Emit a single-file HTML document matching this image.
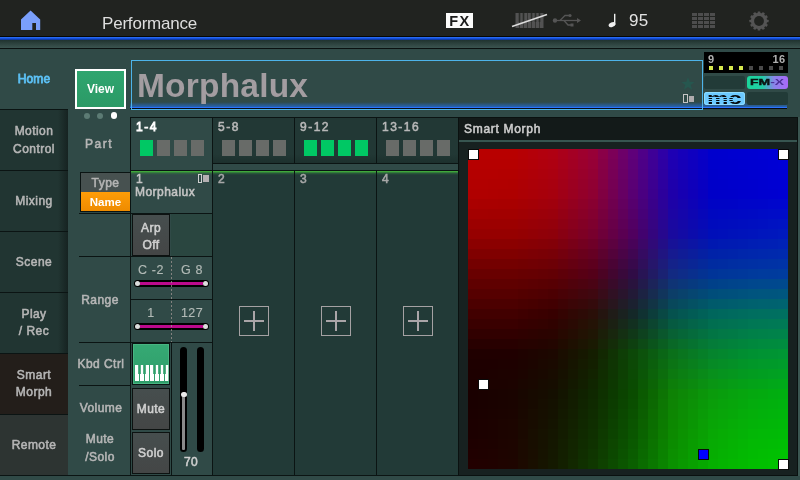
<!DOCTYPE html>
<html><head><meta charset="utf-8"><title>Performance</title>
<style>
*{box-sizing:border-box;margin:0;padding:0}
html,body{width:800px;height:480px;overflow:hidden;background:#304a47}
body{position:relative;font-family:"Liberation Sans",sans-serif;color:#c8c8c8;font-size:12px}
.a{position:absolute}
.t{position:absolute;white-space:nowrap;text-align:center;font-weight:normal;-webkit-text-stroke:.55px;letter-spacing:.45px;color:#b6b6b6;line-height:18px}
#top{left:0;top:0;width:800px;height:36px;background:#212320}
#l1{left:0;top:36px;width:800px;height:1px;background:#050807}
#l2{left:0;top:37px;width:800px;height:3px;background:linear-gradient(#2f74ff,#1550d8 50%,#0a2f90)}
#l3{left:0;top:40px;width:800px;height:8px;background:linear-gradient(#20332f,#3b5450)}
#l4{left:0;top:48px;width:800px;height:1px;background:#0a1110}
.tab{left:0;width:68px;height:61px;background:linear-gradient(90deg,#213532 0,#213532 58px,#162321 68px);border-top:1px solid #0b1413}
.tab .t{left:0;width:68px;font-size:12px}
.hl{height:1px;background:#0b1413}
.vl{width:1px;background:#0b1413}
.btn{background:linear-gradient(#464e4e,#444646);border:1px solid #0d1211}
.gtab{top:117px;width:83px;height:47px;background:linear-gradient(#223835 0,#223835 36px,#1c2f2c 46px);border:1px solid #0b1413}
.gtab .t{left:5px;top:0px;text-align:left;font-size:12px;color:#b8b8b8;letter-spacing:1.5px}
.sq{position:absolute;top:22px;width:13px;height:16px;background:#686b68}
.sq.g{background:#00c864}
.cell{top:170px;width:81px;height:305px;background:#223a37}
.cell .gl{position:absolute;left:0;top:0;width:100%;height:5px;background:linear-gradient(#0b1413 0,#0b1413 1px,#46b43c 1px,#3a9a3a 2px,rgba(50,130,60,.5) 3px,rgba(50,130,60,0) 5px)}
.plus{position:absolute;left:26px;top:136px;width:30px;height:30px;border:1px solid #a5a1a3}
.plus:before{content:"";position:absolute;left:4px;top:13px;width:20px;height:2px;background:#aaa5a8}
.plus:after{content:"";position:absolute;left:13px;top:4px;width:2px;height:20px;background:#aaa5a8}
.mk{position:absolute;width:11px;height:11px;background:#fff;border:1px solid #0a0a0a}
#w{position:absolute;left:0;top:0;width:800px;height:480px;will-change:transform}
</style></head><body><div id="w">

<!-- top bar -->
<div class="a" id="top"></div>
<div class="a" id="l1"></div><div class="a" id="l2"></div><div class="a" id="l3"></div><div class="a" id="l4"></div>
<svg class="a" style="left:20px;top:10px" width="22" height="21" viewBox="0 0 22 21"><path d="M1 9.6 L10.6 0.6 L20.2 9.6 L20.2 20 L16 20 L16 13 L12.3 13 L12.3 20 L1 20 Z" fill="#7a9ffc"/></svg>
<div class="a" style="left:102px;top:13px;font-size:17px;line-height:22px;color:#dedede;letter-spacing:-.2px">Performance</div>
<div class="a" style="left:446px;top:13px;width:27px;height:15px;background:#fbfbfb;color:#1c1c1c;font-weight:bold;font-size:14.5px;line-height:16px;text-align:center;letter-spacing:1.4px;text-indent:1px">FX</div>
<svg class="a" style="left:511px;top:12px" width="37" height="17" viewBox="0 0 37 17"><rect x="4.500" y="1" width="28" height="15" fill="#525252"/><g fill="#2a2c29"><rect x="7.700" y="1" width="1.600" height="9"/><rect x="11.700" y="1" width="1.600" height="9"/><rect x="19.700" y="1" width="1.600" height="9"/><rect x="23.700" y="1" width="1.600" height="9"/><rect x="27.700" y="1" width="1.600" height="9"/><rect x="8.200" y="10" width=".7" height="6"/><rect x="12.200" y="10" width=".7" height="6"/><rect x="16.200" y="1" width=".7" height="15"/><rect x="20.200" y="10" width=".7" height="6"/><rect x="24.200" y="10" width=".7" height="6"/><rect x="28.200" y="10" width=".7" height="6"/></g><path d="M1 14.500 L36 2.500" stroke="#dcdcdc" stroke-width="1.500"/></svg>
<svg class="a" style="left:552px;top:13px" width="30" height="15" viewBox="0 0 30 15" fill="none" stroke="#555" stroke-width="1.3">
<circle cx="3" cy="7.5" r="2.2" fill="#555" stroke="none"/><path d="M3 7.500 H26"/><path d="M25 5 L29 7.500 L25 10 Z" fill="#555" stroke="none"/>
<path d="M8 7.500 L13 2.500 H17"/><circle cx="18" cy="2.500" r="1.600" fill="#555" stroke="none"/>
<path d="M12 7.500 L16 12 H19"/><rect x="18.500" y="10.500" width="3" height="3" fill="#555" stroke="none"/></svg>
<svg class="a" style="left:607px;top:13px" width="10" height="15" viewBox="0 0 10 15"><rect x="7" y="0.800" width="1.400" height="11" fill="#f0f0f0"/><ellipse cx="5" cy="11.600" rx="3.500" ry="2.300" fill="#f0f0f0" transform="rotate(-22 5 11.600)"/></svg>
<div class="a" style="left:629px;top:10px;font-size:17px;line-height:22px;color:#e2e2e2;letter-spacing:.3px">95</div>
<svg class="a" style="left:692px;top:13px" width="24" height="16" viewBox="0 0 24 16" fill="#4d4d4d"><g id="gr"><rect x="0" y="0" width="5" height="3"/><rect x="6" y="0" width="5" height="3"/><rect x="12" y="0" width="5" height="3"/><rect x="18" y="0" width="5" height="3"/></g><use href="#gr" y="4"/><use href="#gr" y="8"/><use href="#gr" y="12"/></svg>
<svg class="a" style="left:747.5px;top:9.5px" width="22" height="22" viewBox="-11 -11 22 22"><g fill="#545454"><circle r="8.2"/><g id="th"><rect x="-1.350" y="-9.600" width="2.700" height="19.200" rx=".5"/></g><use href="#th" transform="rotate(30)"/><use href="#th" transform="rotate(60)"/><use href="#th" transform="rotate(90)"/><use href="#th" transform="rotate(120)"/><use href="#th" transform="rotate(150)"/></g><circle r="4.900" fill="#212320"/></svg>

<!-- sidebar -->
<div class="t" style="left:0;top:70px;width:68px;color:#5cc0f4;font-size:12px;letter-spacing:.1px;-webkit-text-stroke:.8px">Home</div>
<div class="a tab" style="top:109px"><div class="t" style="top:12px">Motion</div><div class="t" style="top:30px">Control</div></div>
<div class="a tab" style="top:170px"><div class="t" style="top:21px">Mixing</div></div>
<div class="a tab" style="top:231px"><div class="t" style="top:21px">Scene</div></div>
<div class="a tab" style="top:292px"><div class="t" style="top:12px">Play</div><div class="t" style="top:29px">/ Rec</div></div>
<div class="a tab" style="top:353px;background:#231e1a"><div class="t" style="top:12px">Smart</div><div class="t" style="top:29px">Morph</div></div>
<div class="a tab" style="top:414px;background:#2d3432"><div class="t" style="top:21px">Remote</div></div>
<div class="a hl" style="left:0;top:475px;width:800px"></div>

<!-- view button -->
<div class="a" style="left:75px;top:69px;width:51px;height:40px;border:2px solid #fff;background:linear-gradient(#2fa56f,#2b9a66);color:#fff;font-weight:bold;font-size:12px;line-height:36px;text-align:center">View</div>
<div class="a" style="left:84px;top:113px;width:6px;height:6px;border-radius:3px;background:#5c7b74"></div>
<div class="a" style="left:97px;top:113px;width:6px;height:6px;border-radius:3px;background:#5c7b74"></div>
<div class="a" style="left:110.500px;top:112.400px;width:6.400px;height:6.400px;border-radius:4px;background:#fff"></div>

<!-- name box -->
<div class="a" style="left:130px;top:102px;width:657px;height:5px;background:linear-gradient(rgba(40,100,170,0),rgba(38,104,196,.85))"></div>
<div class="a" style="left:130px;top:107px;width:657px;height:1px;background:#2a74ff"></div>
<div class="a" style="left:130px;top:108px;width:657px;height:1px;background:#060a10"></div>
<div class="a" style="left:131px;top:60px;width:572px;height:50px;border:1px solid #4db4ea"></div>
<div class="a" style="left:137px;top:66px;font-size:33.5px;line-height:40px;font-weight:bold;color:#a39da1;letter-spacing:.2px">Morphalux</div>
<svg class="a" style="left:681px;top:77px" width="14" height="13" viewBox="0 0 14 13"><path d="M7 0.300 L8.700 4.800 L13.600 5 L9.800 8 L11.100 12.700 L7 10 L2.900 12.700 L4.200 8 L0.400 5 L5.300 4.800 Z" fill="#26574f"/></svg>
<div class="a" style="left:683px;top:94px;width:5px;height:9px;border:1px solid #c4c4c4"></div>
<div class="a" style="left:688.5px;top:95.5px;width:5.5px;height:6.5px;background:#b0acae"></div>

<!-- badges -->
<div class="a" style="left:704px;top:52px;width:84px;height:21px;background:#000"></div>
<div class="a" style="left:708px;top:53px;font-size:11px;line-height:13px;font-weight:bold;color:#b0b0b0">9</div>
<div class="a" style="left:759.500px;top:53px;width:26px;letter-spacing:.4px;text-align:right;font-size:11px;line-height:13px;font-weight:bold;color:#b0b0b0">16</div>
<div class="a" style="left:709px;top:66px;width:4px;height:4px;background:#d6e84e;box-shadow:10px 0 #d6e84e,20px 0 #d6e84e,30px 0 #d6e84e,40px 0 #4a4a4a,50px 0 #4a4a4a,60px 0 #4a4a4a,70px 0 #4a4a4a"></div>
<div class="a" style="left:704px;top:76px;width:41px;height:13px;background:#223b38;border-radius:2px"></div>
<div class="a" style="left:747px;top:76px;width:41px;height:13px;border-radius:3px;background:linear-gradient(90deg,#1ad69a 0,#22cca6 38%,#8a84ea 66%,#a968f8 100%);overflow:hidden"><div class="a" style="left:3px;top:0;width:23px;transform:scaleX(1.55);transform-origin:0 0;color:#0c1412;font-weight:bold;font-size:9px;line-height:13px;white-space:nowrap;-webkit-text-stroke:.4px">FM<span style="color:#4b2f96;-webkit-text-stroke:0">-X</span></div></div>
<div class="a" style="left:704px;top:92px;width:41px;height:13px;border-radius:3px;background:#6ccaff;overflow:hidden"></div>
<div class="a" style="left:704px;top:92px;width:41px;height:13px;border-radius:3px;overflow:hidden;box-shadow:inset 0 0 0 1px #8cdcff"><div class="a" style="left:3px;top:-2.5px;transform:scaleX(1.5);transform-origin:0 0;color:#05090c;font-weight:bold;font-size:16px;line-height:18px;white-space:nowrap">mc</div><div class="a" style="left:2px;top:5.2px;width:27px;height:6px;background:repeating-linear-gradient(#6ccaff 0,#6ccaff .8px,transparent .8px,transparent 2px)"></div></div>
<div class="a" style="left:747px;top:92px;width:41px;height:13px;background:#223b38;border-radius:2px"></div>

<!-- label column -->
<div class="t" style="left:79px;top:135px;width:40px;font-size:12px;letter-spacing:1.5px">Part</div>
<div class="a" style="left:80px;top:172px;width:51px;height:40px;border:1px solid #0b1413;background:linear-gradient(#ff9d08 50%,#ee8b00)"></div>
<div class="t" style="left:81px;top:173px;width:49px;height:19px;padding-top:1px;background:#475150;color:#b4b4b4;font-size:12px;line-height:19px">Type</div>
<div class="t" style="left:81px;top:193px;width:49px;height:18px;color:#fff;font-size:11.5px;line-height:19px;font-weight:bold;-webkit-text-stroke:0;letter-spacing:.1px">Name</div>
<div class="t" style="left:79px;top:291px;width:42px;font-size:12px">Range</div>
<div class="t" style="left:75px;top:355px;width:52px;font-size:12px">Kbd Ctrl</div>
<div class="t" style="left:75px;top:399px;width:52px;font-size:12px">Volume</div>
<div class="t" style="left:75px;top:430px;width:50px;font-size:12px">Mute</div>
<div class="t" style="left:75px;top:448px;width:50px;font-size:12px">/Solo</div>
<div class="a hl" style="left:79px;top:213px;width:134px"></div>
<div class="a hl" style="left:79px;top:256px;width:134px"></div>
<div class="a hl" style="left:131px;top:299px;width:82px"></div>
<div class="a hl" style="left:79px;top:342px;width:134px"></div>
<div class="a hl" style="left:79px;top:385px;width:52px"></div>
<div class="a vl" style="left:130px;top:118px;height:357px"></div>

<!-- group tabs -->
<div class="a gtab" style="left:130px;height:54px;background:#304a47;border-bottom:none"><div class="t" style="color:#fff;-webkit-text-stroke:.85px">1-4</div><div class="sq g" style="left:9px"></div><div class="sq" style="left:26px"></div><div class="sq" style="left:43px"></div><div class="sq" style="left:60px"></div></div>
<div class="a gtab" style="left:212px"><div class="t">5-8</div><div class="sq" style="left:9px"></div><div class="sq" style="left:26px"></div><div class="sq" style="left:43px"></div><div class="sq" style="left:60px"></div></div>
<div class="a gtab" style="left:294px"><div class="t">9-12</div><div class="sq g" style="left:9px"></div><div class="sq g" style="left:26px"></div><div class="sq g" style="left:43px"></div><div class="sq g" style="left:60px"></div></div>
<div class="a gtab" style="left:376px"><div class="t">13-16</div><div class="sq" style="left:9px"></div><div class="sq" style="left:26px"></div><div class="sq" style="left:43px"></div><div class="sq" style="left:60px"></div></div>

<!-- part cells -->
<div class="a cell" style="left:131px;background:none"><div class="gl"></div></div>
<div class="a cell" style="left:213px"><div class="gl"></div><div class="plus"></div></div>
<div class="a cell" style="left:295px"><div class="gl"></div><div class="plus"></div></div>
<div class="a cell" style="left:377px;width:82px"><div class="gl"></div><div class="plus"></div></div>
<div class="a vl" style="left:212px;top:170px;height:305px"></div>
<div class="a vl" style="left:294px;top:170px;height:305px"></div>
<div class="a vl" style="left:376px;top:170px;height:305px"></div>
<div class="t" style="left:136px;top:172px;font-size:12px;line-height:14px;color:#c4c4c4;text-align:left">1</div>
<div class="t" style="left:135px;top:185px;font-size:12px;line-height:14px;color:#c4c4c4;text-align:left">Morphalux</div>
<div class="t" style="left:218px;top:172px;font-size:12px;line-height:14px;color:#a8a8a8;text-align:left">2</div>
<div class="t" style="left:300px;top:172px;font-size:12px;line-height:14px;color:#a8a8a8;text-align:left">3</div>
<div class="t" style="left:382px;top:172px;font-size:12px;line-height:14px;color:#a8a8a8;text-align:left">4</div>
<div class="a" style="left:198px;top:174px;width:4px;height:9px;border:1px solid #d0d0d0"></div>
<div class="a" style="left:203px;top:175px;width:6px;height:7px;background:#b4b0b2"></div>

<!-- arp -->
<div class="a btn" style="left:132px;top:214px;width:38px;height:42px"></div>
<div class="t" style="left:132px;top:220px;width:38px;font-size:12px;line-height:16px;font-weight:normal;color:#d0d0d0">Arp</div>
<div class="t" style="left:132px;top:237px;width:38px;font-size:12px;line-height:16px;font-weight:normal;color:#d0d0d0">Off</div>
<div class="a" style="left:171px;top:214px;width:41px;height:42px;background:#2a4640"></div>

<!-- range -->
<div class="t" style="left:131px;top:261px;width:40px;font-weight:normal;-webkit-text-stroke:.15px;font-size:12.5px;color:#b2bab6;letter-spacing:.6px">C -2</div>
<div class="t" style="left:172px;top:261px;width:40px;font-weight:normal;-webkit-text-stroke:.15px;font-size:12.5px;color:#b2bab6;letter-spacing:.6px">G 8</div>
<div class="t" style="left:131px;top:304px;width:40px;font-weight:normal;-webkit-text-stroke:.15px;font-size:12.5px;color:#b2bab6">1</div>
<div class="t" style="left:172px;top:304px;width:40px;font-weight:normal;-webkit-text-stroke:.15px;font-size:12.5px;color:#b2bab6">127</div>
<div class="a" style="left:134px;top:280px;width:75px;height:7px;border-radius:4px;background:#000"></div>
<div class="a" style="left:140px;top:282px;width:63px;height:3px;background:#bc0a8c"></div>
<div class="a" style="left:134.800px;top:280.800px;width:5.400px;height:5.400px;border-radius:3px;background:#dcdcdc"></div>
<div class="a" style="left:202.800px;top:280.800px;width:5.400px;height:5.400px;border-radius:3px;background:#dcdcdc"></div>
<div class="a" style="left:134px;top:323px;width:75px;height:7px;border-radius:4px;background:#000"></div>
<div class="a" style="left:140px;top:325px;width:63px;height:3px;background:#bc0a8c"></div>
<div class="a" style="left:134.800px;top:323.800px;width:5.400px;height:5.400px;border-radius:3px;background:#dcdcdc"></div>
<div class="a" style="left:202.800px;top:323.800px;width:5.400px;height:5.400px;border-radius:3px;background:#dcdcdc"></div>

<div class="a" style="left:171px;top:257px;width:1px;height:85px;background:repeating-linear-gradient(rgba(160,150,146,.75) 0,rgba(160,150,146,.75) 2px,transparent 2px,transparent 4px)"></div>
<!-- kbd / mute / solo / fader -->
<div class="a" style="left:132px;top:343px;width:38px;height:42px;border:1px solid #0b1413;background:linear-gradient(#36a974,#2e9d69);box-shadow:inset 0 0 0 1px #48b482"></div>
<svg class="a" style="left:135px;top:365px" width="34" height="16" viewBox="0 0 34 16"><rect x="0" y="0" width="33.300" height="16" fill="#fff"/><g fill="#2f9f6a"><rect x="4" y="0" width="1" height="16"/><rect x="9" y="0" width="1" height="16"/><rect x="14" y="0" width="1" height="16"/><rect x="19" y="0" width="1" height="16"/><rect x="24" y="0" width="1" height="16"/><rect x="29" y="0" width="1" height="16"/><rect x="3.2" y="0" width="2.600" height="9"/><rect x="8.2" y="0" width="2.600" height="9"/><rect x="18.2" y="0" width="2.600" height="9"/><rect x="23.2" y="0" width="2.600" height="9"/><rect x="28.2" y="0" width="2.600" height="9"/></g></svg>
<div class="a btn" style="left:132px;top:388px;width:38px;height:42px"></div>
<div class="t" style="left:132px;top:400px;width:38px;font-size:12px;color:#d0d0d0">Mute</div>
<div class="a btn" style="left:132px;top:432px;width:38px;height:42px"></div>
<div class="t" style="left:132px;top:444px;width:38px;font-size:12px;color:#d0d0d0">Solo</div>
<div class="a vl" style="left:171px;top:343px;height:132px"></div>
<div class="a" style="left:180px;top:347px;width:7px;height:105px;border-radius:4px;background:#000"></div>
<div class="a" style="left:197px;top:347px;width:7px;height:105px;border-radius:4px;background:#000"></div>
<div class="a" style="left:182px;top:395px;width:3px;height:55px;background:#8a8a8a;border-radius:1px"></div>
<div class="a" style="left:181px;top:391.500px;width:5.600px;height:5.600px;border-radius:3px;background:#ececec"></div>
<div class="t" style="left:176px;top:453px;width:30px;font-size:12px;color:#cfcfcf">70</div>

<!-- smart morph panel -->
<div class="a" style="left:458px;top:117px;width:340px;height:359px;background:#172120;border:1px solid #0a1110"></div>
<div class="a" style="left:459px;top:118px;width:338px;height:22px;background:#131a19"></div>
<div class="a" style="left:459px;top:140px;width:338px;height:2px;background:#375550"></div>
<div class="t" style="left:464px;top:120px;font-size:12px;text-align:left;color:#cdcdcd;letter-spacing:.7px">Smart Morph</div>
<div class="a" style="left:468px;top:149px;width:320px;height:320px"><svg id="map" width="320" height="320" viewBox="0 0 320 320" shape-rendering="crispEdges"><rect x="0" y="0" width="10" height="10" fill="#b80000"/><rect x="10" y="0" width="10" height="10" fill="#b80000"/><rect x="20" y="0" width="10" height="10" fill="#b80000"/><rect x="30" y="0" width="10" height="10" fill="#b80000"/><rect x="40" y="0" width="10" height="10" fill="#b80000"/><rect x="50" y="0" width="10" height="10" fill="#b60004"/><rect x="60" y="0" width="10" height="10" fill="#b40009"/><rect x="70" y="0" width="10" height="10" fill="#b2000e"/><rect x="80" y="0" width="10" height="10" fill="#b00012"/><rect x="90" y="0" width="10" height="10" fill="#aa001b"/><rect x="100" y="0" width="10" height="10" fill="#a40024"/><rect x="110" y="0" width="10" height="10" fill="#9e002e"/><rect x="120" y="0" width="10" height="10" fill="#980037"/><rect x="130" y="0" width="10" height="10" fill="#8a0048"/><rect x="140" y="0" width="10" height="10" fill="#7c0058"/><rect x="150" y="0" width="10" height="10" fill="#6d0069"/><rect x="160" y="0" width="10" height="10" fill="#5f007a"/><rect x="170" y="0" width="10" height="10" fill="#4f0088"/><rect x="180" y="0" width="10" height="10" fill="#3e0097"/><rect x="190" y="0" width="10" height="10" fill="#2e00a6"/><rect x="200" y="0" width="10" height="10" fill="#1e00b4"/><rect x="210" y="0" width="10" height="10" fill="#1600ba"/><rect x="220" y="0" width="10" height="10" fill="#0f00c0"/><rect x="230" y="0" width="10" height="10" fill="#0800c7"/><rect x="240" y="0" width="10" height="10" fill="#0000cd"/><rect x="250" y="0" width="10" height="10" fill="#0000ce"/><rect x="260" y="0" width="10" height="10" fill="#0000d0"/><rect x="270" y="0" width="10" height="10" fill="#0000d1"/><rect x="280" y="0" width="10" height="10" fill="#0000d2"/><rect x="290" y="0" width="10" height="10" fill="#0000d4"/><rect x="300" y="0" width="10" height="10" fill="#0000d5"/><rect x="310" y="0" width="10" height="10" fill="#0000d7"/><rect x="0" y="10" width="10" height="10" fill="#b60000"/><rect x="10" y="10" width="10" height="10" fill="#b60000"/><rect x="20" y="10" width="10" height="10" fill="#b60000"/><rect x="30" y="10" width="10" height="10" fill="#b60000"/><rect x="40" y="10" width="10" height="10" fill="#b60000"/><rect x="50" y="10" width="10" height="10" fill="#b40004"/><rect x="60" y="10" width="10" height="10" fill="#b20008"/><rect x="70" y="10" width="10" height="10" fill="#b0000d"/><rect x="80" y="10" width="10" height="10" fill="#ae0011"/><rect x="90" y="10" width="10" height="10" fill="#a8001a"/><rect x="100" y="10" width="10" height="10" fill="#a20023"/><rect x="110" y="10" width="10" height="10" fill="#9c002d"/><rect x="120" y="10" width="10" height="10" fill="#960036"/><rect x="130" y="10" width="10" height="10" fill="#870046"/><rect x="140" y="10" width="10" height="10" fill="#790057"/><rect x="150" y="10" width="10" height="10" fill="#6b0068"/><rect x="160" y="10" width="10" height="10" fill="#5d0078"/><rect x="170" y="10" width="10" height="10" fill="#4d0087"/><rect x="180" y="10" width="10" height="10" fill="#3e0095"/><rect x="190" y="10" width="10" height="10" fill="#2e00a3"/><rect x="200" y="10" width="10" height="10" fill="#1e00b2"/><rect x="210" y="10" width="10" height="10" fill="#1600b8"/><rect x="220" y="10" width="10" height="10" fill="#0f00bf"/><rect x="230" y="10" width="10" height="10" fill="#0800c5"/><rect x="240" y="10" width="10" height="10" fill="#0000cc"/><rect x="250" y="10" width="10" height="10" fill="#0000cd"/><rect x="260" y="10" width="10" height="10" fill="#0000ce"/><rect x="270" y="10" width="10" height="10" fill="#0000d0"/><rect x="280" y="10" width="10" height="10" fill="#0000d1"/><rect x="290" y="10" width="10" height="10" fill="#0000d2"/><rect x="300" y="10" width="10" height="10" fill="#0000d4"/><rect x="310" y="10" width="10" height="10" fill="#0000d6"/><rect x="0" y="20" width="10" height="10" fill="#b40000"/><rect x="10" y="20" width="10" height="10" fill="#b40000"/><rect x="20" y="20" width="10" height="10" fill="#b40000"/><rect x="30" y="20" width="10" height="10" fill="#b30000"/><rect x="40" y="20" width="10" height="10" fill="#b30000"/><rect x="50" y="20" width="10" height="10" fill="#b10004"/><rect x="60" y="20" width="10" height="10" fill="#af0008"/><rect x="70" y="20" width="10" height="10" fill="#ad000c"/><rect x="80" y="20" width="10" height="10" fill="#ab0010"/><rect x="90" y="20" width="10" height="10" fill="#a50019"/><rect x="100" y="20" width="10" height="10" fill="#9f0022"/><rect x="110" y="20" width="10" height="10" fill="#99002b"/><rect x="120" y="20" width="10" height="10" fill="#930034"/><rect x="130" y="20" width="10" height="10" fill="#850045"/><rect x="140" y="20" width="10" height="10" fill="#770056"/><rect x="150" y="20" width="10" height="10" fill="#690066"/><rect x="160" y="20" width="10" height="10" fill="#5c0076"/><rect x="170" y="20" width="10" height="10" fill="#4c0085"/><rect x="180" y="20" width="10" height="10" fill="#3d0093"/><rect x="190" y="20" width="10" height="10" fill="#2d00a1"/><rect x="200" y="20" width="10" height="10" fill="#1e00af"/><rect x="210" y="20" width="10" height="10" fill="#1600b6"/><rect x="220" y="20" width="10" height="10" fill="#0f00bd"/><rect x="230" y="20" width="10" height="10" fill="#0800c4"/><rect x="240" y="20" width="10" height="10" fill="#0000ca"/><rect x="250" y="20" width="10" height="10" fill="#0000cc"/><rect x="260" y="20" width="10" height="10" fill="#0000cd"/><rect x="270" y="20" width="10" height="10" fill="#0000ce"/><rect x="280" y="20" width="10" height="10" fill="#0000d0"/><rect x="290" y="20" width="10" height="10" fill="#0000d1"/><rect x="300" y="20" width="10" height="10" fill="#0000d3"/><rect x="310" y="20" width="10" height="10" fill="#0000d4"/><rect x="0" y="30" width="10" height="10" fill="#b20000"/><rect x="10" y="30" width="10" height="10" fill="#b20000"/><rect x="20" y="30" width="10" height="10" fill="#b10000"/><rect x="30" y="30" width="10" height="10" fill="#b10000"/><rect x="40" y="30" width="10" height="10" fill="#b00000"/><rect x="50" y="30" width="10" height="10" fill="#ae0004"/><rect x="60" y="30" width="10" height="10" fill="#ac0008"/><rect x="70" y="30" width="10" height="10" fill="#aa000b"/><rect x="80" y="30" width="10" height="10" fill="#a8000f"/><rect x="90" y="30" width="10" height="10" fill="#a20018"/><rect x="100" y="30" width="10" height="10" fill="#9c0021"/><rect x="110" y="30" width="10" height="10" fill="#96002a"/><rect x="120" y="30" width="10" height="10" fill="#900033"/><rect x="130" y="30" width="10" height="10" fill="#830044"/><rect x="140" y="30" width="10" height="10" fill="#750054"/><rect x="150" y="30" width="10" height="10" fill="#670064"/><rect x="160" y="30" width="10" height="10" fill="#5a0075"/><rect x="170" y="30" width="10" height="10" fill="#4b0083"/><rect x="180" y="30" width="10" height="10" fill="#3c0091"/><rect x="190" y="30" width="10" height="10" fill="#2d009f"/><rect x="200" y="30" width="10" height="10" fill="#1e00ac"/><rect x="210" y="30" width="10" height="10" fill="#1600b4"/><rect x="220" y="30" width="10" height="10" fill="#0f00bb"/><rect x="230" y="30" width="10" height="10" fill="#0800c2"/><rect x="240" y="30" width="10" height="10" fill="#0000c9"/><rect x="250" y="30" width="10" height="10" fill="#0000ca"/><rect x="260" y="30" width="10" height="10" fill="#0000cc"/><rect x="270" y="30" width="10" height="10" fill="#0000cd"/><rect x="280" y="30" width="10" height="10" fill="#0000ce"/><rect x="290" y="30" width="10" height="10" fill="#0000d0"/><rect x="300" y="30" width="10" height="10" fill="#0000d2"/><rect x="310" y="30" width="10" height="10" fill="#0000d3"/><rect x="0" y="40" width="10" height="10" fill="#b00000"/><rect x="10" y="40" width="10" height="10" fill="#b00000"/><rect x="20" y="40" width="10" height="10" fill="#af0000"/><rect x="30" y="40" width="10" height="10" fill="#ae0000"/><rect x="40" y="40" width="10" height="10" fill="#ae0000"/><rect x="50" y="40" width="10" height="10" fill="#ac0004"/><rect x="60" y="40" width="10" height="10" fill="#aa0007"/><rect x="70" y="40" width="10" height="10" fill="#a8000a"/><rect x="80" y="40" width="10" height="10" fill="#a6000e"/><rect x="90" y="40" width="10" height="10" fill="#a00017"/><rect x="100" y="40" width="10" height="10" fill="#9a0020"/><rect x="110" y="40" width="10" height="10" fill="#940029"/><rect x="120" y="40" width="10" height="10" fill="#8e0032"/><rect x="130" y="40" width="10" height="10" fill="#800042"/><rect x="140" y="40" width="10" height="10" fill="#730052"/><rect x="150" y="40" width="10" height="10" fill="#660063"/><rect x="160" y="40" width="10" height="10" fill="#580073"/><rect x="170" y="40" width="10" height="10" fill="#4a0081"/><rect x="180" y="40" width="10" height="10" fill="#3b008e"/><rect x="190" y="40" width="10" height="10" fill="#2c009c"/><rect x="200" y="40" width="10" height="10" fill="#1e00aa"/><rect x="210" y="40" width="10" height="10" fill="#1600b2"/><rect x="220" y="40" width="10" height="10" fill="#0f00b9"/><rect x="230" y="40" width="10" height="10" fill="#0800c0"/><rect x="240" y="40" width="10" height="10" fill="#0000c8"/><rect x="250" y="40" width="10" height="10" fill="#0000c9"/><rect x="260" y="40" width="10" height="10" fill="#0000ca"/><rect x="270" y="40" width="10" height="10" fill="#0000cc"/><rect x="280" y="40" width="10" height="10" fill="#0000cd"/><rect x="290" y="40" width="10" height="10" fill="#0000cf"/><rect x="300" y="40" width="10" height="10" fill="#0000d0"/><rect x="310" y="40" width="10" height="10" fill="#0000d2"/><rect x="0" y="50" width="10" height="10" fill="#aa0000"/><rect x="10" y="50" width="10" height="10" fill="#a90000"/><rect x="20" y="50" width="10" height="10" fill="#a90000"/><rect x="30" y="50" width="10" height="10" fill="#a80000"/><rect x="40" y="50" width="10" height="10" fill="#a80000"/><rect x="50" y="50" width="10" height="10" fill="#a60003"/><rect x="60" y="50" width="10" height="10" fill="#a40006"/><rect x="70" y="50" width="10" height="10" fill="#a2000a"/><rect x="80" y="50" width="10" height="10" fill="#a0000d"/><rect x="90" y="50" width="10" height="10" fill="#9a0016"/><rect x="100" y="50" width="10" height="10" fill="#94001f"/><rect x="110" y="50" width="10" height="10" fill="#8e0028"/><rect x="120" y="50" width="10" height="10" fill="#880031"/><rect x="130" y="50" width="10" height="10" fill="#7c0040"/><rect x="140" y="50" width="10" height="10" fill="#6f004f"/><rect x="150" y="50" width="10" height="10" fill="#63005f"/><rect x="160" y="50" width="10" height="10" fill="#56006e"/><rect x="170" y="50" width="10" height="10" fill="#48017c"/><rect x="180" y="50" width="10" height="10" fill="#39018a"/><rect x="190" y="50" width="10" height="10" fill="#2b0299"/><rect x="200" y="50" width="10" height="10" fill="#1d02a7"/><rect x="210" y="50" width="10" height="10" fill="#1603ae"/><rect x="220" y="50" width="10" height="10" fill="#0e03b6"/><rect x="230" y="50" width="10" height="10" fill="#0703bd"/><rect x="240" y="50" width="10" height="10" fill="#0004c4"/><rect x="250" y="50" width="10" height="10" fill="#0004c5"/><rect x="260" y="50" width="10" height="10" fill="#0004c6"/><rect x="270" y="50" width="10" height="10" fill="#0005c8"/><rect x="280" y="50" width="10" height="10" fill="#0005c9"/><rect x="290" y="50" width="10" height="10" fill="#0005ca"/><rect x="300" y="50" width="10" height="10" fill="#0006cc"/><rect x="310" y="50" width="10" height="10" fill="#0006cd"/><rect x="0" y="60" width="10" height="10" fill="#a30000"/><rect x="10" y="60" width="10" height="10" fill="#a30000"/><rect x="20" y="60" width="10" height="10" fill="#a20000"/><rect x="30" y="60" width="10" height="10" fill="#a20000"/><rect x="40" y="60" width="10" height="10" fill="#a20000"/><rect x="50" y="60" width="10" height="10" fill="#a00003"/><rect x="60" y="60" width="10" height="10" fill="#9e0006"/><rect x="70" y="60" width="10" height="10" fill="#9c0009"/><rect x="80" y="60" width="10" height="10" fill="#9a000c"/><rect x="90" y="60" width="10" height="10" fill="#940015"/><rect x="100" y="60" width="10" height="10" fill="#8e001e"/><rect x="110" y="60" width="10" height="10" fill="#890027"/><rect x="120" y="60" width="10" height="10" fill="#830030"/><rect x="130" y="60" width="10" height="10" fill="#77003e"/><rect x="140" y="60" width="10" height="10" fill="#6c004c"/><rect x="150" y="60" width="10" height="10" fill="#60005b"/><rect x="160" y="60" width="10" height="10" fill="#540069"/><rect x="170" y="60" width="10" height="10" fill="#460178"/><rect x="180" y="60" width="10" height="10" fill="#380286"/><rect x="190" y="60" width="10" height="10" fill="#2a0495"/><rect x="200" y="60" width="10" height="10" fill="#1c05a4"/><rect x="210" y="60" width="10" height="10" fill="#1506ab"/><rect x="220" y="60" width="10" height="10" fill="#0e06b2"/><rect x="230" y="60" width="10" height="10" fill="#0707b9"/><rect x="240" y="60" width="10" height="10" fill="#0008c0"/><rect x="250" y="60" width="10" height="10" fill="#0008c2"/><rect x="260" y="60" width="10" height="10" fill="#0009c2"/><rect x="270" y="60" width="10" height="10" fill="#0009c4"/><rect x="280" y="60" width="10" height="10" fill="#000ac4"/><rect x="290" y="60" width="10" height="10" fill="#000bc6"/><rect x="300" y="60" width="10" height="10" fill="#000cc7"/><rect x="310" y="60" width="10" height="10" fill="#000cc8"/><rect x="0" y="70" width="10" height="10" fill="#9c0000"/><rect x="10" y="70" width="10" height="10" fill="#9c0000"/><rect x="20" y="70" width="10" height="10" fill="#9c0000"/><rect x="30" y="70" width="10" height="10" fill="#9c0000"/><rect x="40" y="70" width="10" height="10" fill="#9c0000"/><rect x="50" y="70" width="10" height="10" fill="#9a0003"/><rect x="60" y="70" width="10" height="10" fill="#980006"/><rect x="70" y="70" width="10" height="10" fill="#960008"/><rect x="80" y="70" width="10" height="10" fill="#94000b"/><rect x="90" y="70" width="10" height="10" fill="#8e0014"/><rect x="100" y="70" width="10" height="10" fill="#89001d"/><rect x="110" y="70" width="10" height="10" fill="#830025"/><rect x="120" y="70" width="10" height="10" fill="#7e002e"/><rect x="130" y="70" width="10" height="10" fill="#73003c"/><rect x="140" y="70" width="10" height="10" fill="#680049"/><rect x="150" y="70" width="10" height="10" fill="#5d0057"/><rect x="160" y="70" width="10" height="10" fill="#520064"/><rect x="170" y="70" width="10" height="10" fill="#440273"/><rect x="180" y="70" width="10" height="10" fill="#360482"/><rect x="190" y="70" width="10" height="10" fill="#280692"/><rect x="200" y="70" width="10" height="10" fill="#1a08a1"/><rect x="210" y="70" width="10" height="10" fill="#1408a8"/><rect x="220" y="70" width="10" height="10" fill="#0d09af"/><rect x="230" y="70" width="10" height="10" fill="#070ab6"/><rect x="240" y="70" width="10" height="10" fill="#000bbd"/><rect x="250" y="70" width="10" height="10" fill="#000cbe"/><rect x="260" y="70" width="10" height="10" fill="#000dbe"/><rect x="270" y="70" width="10" height="10" fill="#000ebf"/><rect x="280" y="70" width="10" height="10" fill="#000fc0"/><rect x="290" y="70" width="10" height="10" fill="#0010c1"/><rect x="300" y="70" width="10" height="10" fill="#0012c2"/><rect x="310" y="70" width="10" height="10" fill="#0013c3"/><rect x="0" y="80" width="10" height="10" fill="#960000"/><rect x="10" y="80" width="10" height="10" fill="#960000"/><rect x="20" y="80" width="10" height="10" fill="#960000"/><rect x="30" y="80" width="10" height="10" fill="#960000"/><rect x="40" y="80" width="10" height="10" fill="#960000"/><rect x="50" y="80" width="10" height="10" fill="#940002"/><rect x="60" y="80" width="10" height="10" fill="#920005"/><rect x="70" y="80" width="10" height="10" fill="#900008"/><rect x="80" y="80" width="10" height="10" fill="#8e000a"/><rect x="90" y="80" width="10" height="10" fill="#880013"/><rect x="100" y="80" width="10" height="10" fill="#83001c"/><rect x="110" y="80" width="10" height="10" fill="#7e0024"/><rect x="120" y="80" width="10" height="10" fill="#78002d"/><rect x="130" y="80" width="10" height="10" fill="#6e003a"/><rect x="140" y="80" width="10" height="10" fill="#640046"/><rect x="150" y="80" width="10" height="10" fill="#5a0052"/><rect x="160" y="80" width="10" height="10" fill="#50005f"/><rect x="170" y="80" width="10" height="10" fill="#42026f"/><rect x="180" y="80" width="10" height="10" fill="#34057e"/><rect x="190" y="80" width="10" height="10" fill="#27088e"/><rect x="200" y="80" width="10" height="10" fill="#190a9e"/><rect x="210" y="80" width="10" height="10" fill="#130ba5"/><rect x="220" y="80" width="10" height="10" fill="#0c0cac"/><rect x="230" y="80" width="10" height="10" fill="#060eb2"/><rect x="240" y="80" width="10" height="10" fill="#000fb9"/><rect x="250" y="80" width="10" height="10" fill="#0010ba"/><rect x="260" y="80" width="10" height="10" fill="#0012ba"/><rect x="270" y="80" width="10" height="10" fill="#0013bb"/><rect x="280" y="80" width="10" height="10" fill="#0014bc"/><rect x="290" y="80" width="10" height="10" fill="#0016bd"/><rect x="300" y="80" width="10" height="10" fill="#0017bd"/><rect x="310" y="80" width="10" height="10" fill="#0019be"/><rect x="0" y="90" width="10" height="10" fill="#8b0000"/><rect x="10" y="90" width="10" height="10" fill="#8b0000"/><rect x="20" y="90" width="10" height="10" fill="#8b0000"/><rect x="30" y="90" width="10" height="10" fill="#8b0000"/><rect x="40" y="90" width="10" height="10" fill="#8b0000"/><rect x="50" y="90" width="10" height="10" fill="#890002"/><rect x="60" y="90" width="10" height="10" fill="#870004"/><rect x="70" y="90" width="10" height="10" fill="#850006"/><rect x="80" y="90" width="10" height="10" fill="#830008"/><rect x="90" y="90" width="10" height="10" fill="#7e0010"/><rect x="100" y="90" width="10" height="10" fill="#790018"/><rect x="110" y="90" width="10" height="10" fill="#740020"/><rect x="120" y="90" width="10" height="10" fill="#6f0028"/><rect x="130" y="90" width="10" height="10" fill="#650134"/><rect x="140" y="90" width="10" height="10" fill="#5c0240"/><rect x="150" y="90" width="10" height="10" fill="#52024d"/><rect x="160" y="90" width="10" height="10" fill="#480359"/><rect x="170" y="90" width="10" height="10" fill="#3c0768"/><rect x="180" y="90" width="10" height="10" fill="#300a78"/><rect x="190" y="90" width="10" height="10" fill="#230e87"/><rect x="200" y="90" width="10" height="10" fill="#171297"/><rect x="210" y="90" width="10" height="10" fill="#11149d"/><rect x="220" y="90" width="10" height="10" fill="#0c15a4"/><rect x="230" y="90" width="10" height="10" fill="#0617aa"/><rect x="240" y="90" width="10" height="10" fill="#0018b1"/><rect x="250" y="90" width="10" height="10" fill="#001ab2"/><rect x="260" y="90" width="10" height="10" fill="#001bb2"/><rect x="270" y="90" width="10" height="10" fill="#001cb3"/><rect x="280" y="90" width="10" height="10" fill="#001eb4"/><rect x="290" y="90" width="10" height="10" fill="#001fb5"/><rect x="300" y="90" width="10" height="10" fill="#0020b5"/><rect x="310" y="90" width="10" height="10" fill="#0022b6"/><rect x="0" y="100" width="10" height="10" fill="#800000"/><rect x="10" y="100" width="10" height="10" fill="#800000"/><rect x="20" y="100" width="10" height="10" fill="#800000"/><rect x="30" y="100" width="10" height="10" fill="#800000"/><rect x="40" y="100" width="10" height="10" fill="#800000"/><rect x="50" y="100" width="10" height="10" fill="#7e0002"/><rect x="60" y="100" width="10" height="10" fill="#7c0004"/><rect x="70" y="100" width="10" height="10" fill="#7a0005"/><rect x="80" y="100" width="10" height="10" fill="#780007"/><rect x="90" y="100" width="10" height="10" fill="#74000e"/><rect x="100" y="100" width="10" height="10" fill="#6f0015"/><rect x="110" y="100" width="10" height="10" fill="#6a001c"/><rect x="120" y="100" width="10" height="10" fill="#660023"/><rect x="130" y="100" width="10" height="10" fill="#5c022f"/><rect x="140" y="100" width="10" height="10" fill="#53033b"/><rect x="150" y="100" width="10" height="10" fill="#4a0447"/><rect x="160" y="100" width="10" height="10" fill="#400652"/><rect x="170" y="100" width="10" height="10" fill="#350b62"/><rect x="180" y="100" width="10" height="10" fill="#2b1071"/><rect x="190" y="100" width="10" height="10" fill="#201581"/><rect x="200" y="100" width="10" height="10" fill="#161a90"/><rect x="210" y="100" width="10" height="10" fill="#101c96"/><rect x="220" y="100" width="10" height="10" fill="#0b1e9c"/><rect x="230" y="100" width="10" height="10" fill="#0520a2"/><rect x="240" y="100" width="10" height="10" fill="#0022a8"/><rect x="250" y="100" width="10" height="10" fill="#0023a9"/><rect x="260" y="100" width="10" height="10" fill="#0024aa"/><rect x="270" y="100" width="10" height="10" fill="#0026ab"/><rect x="280" y="100" width="10" height="10" fill="#0027ac"/><rect x="290" y="100" width="10" height="10" fill="#0028ad"/><rect x="300" y="100" width="10" height="10" fill="#0029ad"/><rect x="310" y="100" width="10" height="10" fill="#002aae"/><rect x="0" y="110" width="10" height="10" fill="#740000"/><rect x="10" y="110" width="10" height="10" fill="#740000"/><rect x="20" y="110" width="10" height="10" fill="#740000"/><rect x="30" y="110" width="10" height="10" fill="#740000"/><rect x="40" y="110" width="10" height="10" fill="#740000"/><rect x="50" y="110" width="10" height="10" fill="#720001"/><rect x="60" y="110" width="10" height="10" fill="#710003"/><rect x="70" y="110" width="10" height="10" fill="#6f0004"/><rect x="80" y="110" width="10" height="10" fill="#6d0006"/><rect x="90" y="110" width="10" height="10" fill="#69000c"/><rect x="100" y="110" width="10" height="10" fill="#650012"/><rect x="110" y="110" width="10" height="10" fill="#610018"/><rect x="120" y="110" width="10" height="10" fill="#5d001e"/><rect x="130" y="110" width="10" height="10" fill="#54022a"/><rect x="140" y="110" width="10" height="10" fill="#4a0435"/><rect x="150" y="110" width="10" height="10" fill="#410741"/><rect x="160" y="110" width="10" height="10" fill="#38094c"/><rect x="170" y="110" width="10" height="10" fill="#2f0f5b"/><rect x="180" y="110" width="10" height="10" fill="#26166b"/><rect x="190" y="110" width="10" height="10" fill="#1d1c7a"/><rect x="200" y="110" width="10" height="10" fill="#142289"/><rect x="210" y="110" width="10" height="10" fill="#0f248f"/><rect x="220" y="110" width="10" height="10" fill="#0a2695"/><rect x="230" y="110" width="10" height="10" fill="#05299a"/><rect x="240" y="110" width="10" height="10" fill="#002ba0"/><rect x="250" y="110" width="10" height="10" fill="#002ca1"/><rect x="260" y="110" width="10" height="10" fill="#002ea2"/><rect x="270" y="110" width="10" height="10" fill="#002fa3"/><rect x="280" y="110" width="10" height="10" fill="#0030a4"/><rect x="290" y="110" width="10" height="10" fill="#0031a5"/><rect x="300" y="110" width="10" height="10" fill="#0032a5"/><rect x="310" y="110" width="10" height="10" fill="#0033a6"/><rect x="0" y="120" width="10" height="10" fill="#690000"/><rect x="10" y="120" width="10" height="10" fill="#690000"/><rect x="20" y="120" width="10" height="10" fill="#690000"/><rect x="30" y="120" width="10" height="10" fill="#690000"/><rect x="40" y="120" width="10" height="10" fill="#690000"/><rect x="50" y="120" width="10" height="10" fill="#670001"/><rect x="60" y="120" width="10" height="10" fill="#660002"/><rect x="70" y="120" width="10" height="10" fill="#640003"/><rect x="80" y="120" width="10" height="10" fill="#620004"/><rect x="90" y="120" width="10" height="10" fill="#5e0009"/><rect x="100" y="120" width="10" height="10" fill="#5b000e"/><rect x="110" y="120" width="10" height="10" fill="#580014"/><rect x="120" y="120" width="10" height="10" fill="#540019"/><rect x="130" y="120" width="10" height="10" fill="#4b0324"/><rect x="140" y="120" width="10" height="10" fill="#420630"/><rect x="150" y="120" width="10" height="10" fill="#39093b"/><rect x="160" y="120" width="10" height="10" fill="#300c46"/><rect x="170" y="120" width="10" height="10" fill="#281455"/><rect x="180" y="120" width="10" height="10" fill="#211b64"/><rect x="190" y="120" width="10" height="10" fill="#1a2273"/><rect x="200" y="120" width="10" height="10" fill="#122a82"/><rect x="210" y="120" width="10" height="10" fill="#0e2c88"/><rect x="220" y="120" width="10" height="10" fill="#092f8d"/><rect x="230" y="120" width="10" height="10" fill="#043292"/><rect x="240" y="120" width="10" height="10" fill="#003498"/><rect x="250" y="120" width="10" height="10" fill="#003699"/><rect x="260" y="120" width="10" height="10" fill="#00379a"/><rect x="270" y="120" width="10" height="10" fill="#00389b"/><rect x="280" y="120" width="10" height="10" fill="#003a9c"/><rect x="290" y="120" width="10" height="10" fill="#003b9d"/><rect x="300" y="120" width="10" height="10" fill="#003b9d"/><rect x="310" y="120" width="10" height="10" fill="#003c9e"/><rect x="0" y="130" width="10" height="10" fill="#5f0000"/><rect x="10" y="130" width="10" height="10" fill="#5f0000"/><rect x="20" y="130" width="10" height="10" fill="#5f0000"/><rect x="30" y="130" width="10" height="10" fill="#5f0000"/><rect x="40" y="130" width="10" height="10" fill="#5f0000"/><rect x="50" y="130" width="10" height="10" fill="#5d0001"/><rect x="60" y="130" width="10" height="10" fill="#5b0002"/><rect x="70" y="130" width="10" height="10" fill="#590002"/><rect x="80" y="130" width="10" height="10" fill="#570003"/><rect x="90" y="130" width="10" height="10" fill="#540107"/><rect x="100" y="130" width="10" height="10" fill="#50020c"/><rect x="110" y="130" width="10" height="10" fill="#4d0310"/><rect x="120" y="130" width="10" height="10" fill="#4a0415"/><rect x="130" y="130" width="10" height="10" fill="#41081f"/><rect x="140" y="130" width="10" height="10" fill="#390b2a"/><rect x="150" y="130" width="10" height="10" fill="#310f34"/><rect x="160" y="130" width="10" height="10" fill="#29133e"/><rect x="170" y="130" width="10" height="10" fill="#221b4c"/><rect x="180" y="130" width="10" height="10" fill="#1c245a"/><rect x="190" y="130" width="10" height="10" fill="#152c67"/><rect x="200" y="130" width="10" height="10" fill="#0f3475"/><rect x="210" y="130" width="10" height="10" fill="#0b377a"/><rect x="220" y="130" width="10" height="10" fill="#073a7f"/><rect x="230" y="130" width="10" height="10" fill="#043d84"/><rect x="240" y="130" width="10" height="10" fill="#004089"/><rect x="250" y="130" width="10" height="10" fill="#00428a"/><rect x="260" y="130" width="10" height="10" fill="#00448b"/><rect x="270" y="130" width="10" height="10" fill="#00458c"/><rect x="280" y="130" width="10" height="10" fill="#00478d"/><rect x="290" y="130" width="10" height="10" fill="#00488d"/><rect x="300" y="130" width="10" height="10" fill="#00488e"/><rect x="310" y="130" width="10" height="10" fill="#00498e"/><rect x="0" y="140" width="10" height="10" fill="#560000"/><rect x="10" y="140" width="10" height="10" fill="#560000"/><rect x="20" y="140" width="10" height="10" fill="#560000"/><rect x="30" y="140" width="10" height="10" fill="#560000"/><rect x="40" y="140" width="10" height="10" fill="#560000"/><rect x="50" y="140" width="10" height="10" fill="#530000"/><rect x="60" y="140" width="10" height="10" fill="#510001"/><rect x="70" y="140" width="10" height="10" fill="#4f0002"/><rect x="80" y="140" width="10" height="10" fill="#4c0002"/><rect x="90" y="140" width="10" height="10" fill="#490206"/><rect x="100" y="140" width="10" height="10" fill="#460409"/><rect x="110" y="140" width="10" height="10" fill="#42060d"/><rect x="120" y="140" width="10" height="10" fill="#3f0810"/><rect x="130" y="140" width="10" height="10" fill="#380c1a"/><rect x="140" y="140" width="10" height="10" fill="#301124"/><rect x="150" y="140" width="10" height="10" fill="#29152d"/><rect x="160" y="140" width="10" height="10" fill="#221a37"/><rect x="170" y="140" width="10" height="10" fill="#1c2343"/><rect x="180" y="140" width="10" height="10" fill="#172c50"/><rect x="190" y="140" width="10" height="10" fill="#11355c"/><rect x="200" y="140" width="10" height="10" fill="#0c3e68"/><rect x="210" y="140" width="10" height="10" fill="#09426c"/><rect x="220" y="140" width="10" height="10" fill="#064671"/><rect x="230" y="140" width="10" height="10" fill="#034976"/><rect x="240" y="140" width="10" height="10" fill="#004d7a"/><rect x="250" y="140" width="10" height="10" fill="#004f7b"/><rect x="260" y="140" width="10" height="10" fill="#00507c"/><rect x="270" y="140" width="10" height="10" fill="#00527d"/><rect x="280" y="140" width="10" height="10" fill="#00547e"/><rect x="290" y="140" width="10" height="10" fill="#00557e"/><rect x="300" y="140" width="10" height="10" fill="#00557e"/><rect x="310" y="140" width="10" height="10" fill="#00567f"/><rect x="0" y="150" width="10" height="10" fill="#4c0000"/><rect x="10" y="150" width="10" height="10" fill="#4c0000"/><rect x="20" y="150" width="10" height="10" fill="#4c0000"/><rect x="30" y="150" width="10" height="10" fill="#4c0000"/><rect x="40" y="150" width="10" height="10" fill="#4c0000"/><rect x="50" y="150" width="10" height="10" fill="#490000"/><rect x="60" y="150" width="10" height="10" fill="#470000"/><rect x="70" y="150" width="10" height="10" fill="#440001"/><rect x="80" y="150" width="10" height="10" fill="#420001"/><rect x="90" y="150" width="10" height="10" fill="#3e0304"/><rect x="100" y="150" width="10" height="10" fill="#3b0607"/><rect x="110" y="150" width="10" height="10" fill="#380809"/><rect x="120" y="150" width="10" height="10" fill="#340b0c"/><rect x="130" y="150" width="10" height="10" fill="#2e1115"/><rect x="140" y="150" width="10" height="10" fill="#28161e"/><rect x="150" y="150" width="10" height="10" fill="#211c27"/><rect x="160" y="150" width="10" height="10" fill="#1b2130"/><rect x="170" y="150" width="10" height="10" fill="#162b3a"/><rect x="180" y="150" width="10" height="10" fill="#123445"/><rect x="190" y="150" width="10" height="10" fill="#0d3e50"/><rect x="200" y="150" width="10" height="10" fill="#08485b"/><rect x="210" y="150" width="10" height="10" fill="#064c5f"/><rect x="220" y="150" width="10" height="10" fill="#045163"/><rect x="230" y="150" width="10" height="10" fill="#025567"/><rect x="240" y="150" width="10" height="10" fill="#005a6b"/><rect x="250" y="150" width="10" height="10" fill="#005b6c"/><rect x="260" y="150" width="10" height="10" fill="#005d6d"/><rect x="270" y="150" width="10" height="10" fill="#005f6d"/><rect x="280" y="150" width="10" height="10" fill="#00616e"/><rect x="290" y="150" width="10" height="10" fill="#00626f"/><rect x="300" y="150" width="10" height="10" fill="#00626f"/><rect x="310" y="150" width="10" height="10" fill="#006370"/><rect x="0" y="160" width="10" height="10" fill="#420000"/><rect x="10" y="160" width="10" height="10" fill="#420000"/><rect x="20" y="160" width="10" height="10" fill="#420000"/><rect x="30" y="160" width="10" height="10" fill="#420000"/><rect x="40" y="160" width="10" height="10" fill="#420000"/><rect x="50" y="160" width="10" height="10" fill="#3f0000"/><rect x="60" y="160" width="10" height="10" fill="#3c0000"/><rect x="70" y="160" width="10" height="10" fill="#3a0000"/><rect x="80" y="160" width="10" height="10" fill="#370000"/><rect x="90" y="160" width="10" height="10" fill="#340402"/><rect x="100" y="160" width="10" height="10" fill="#300804"/><rect x="110" y="160" width="10" height="10" fill="#2d0b06"/><rect x="120" y="160" width="10" height="10" fill="#2a0f08"/><rect x="130" y="160" width="10" height="10" fill="#241510"/><rect x="140" y="160" width="10" height="10" fill="#1f1c18"/><rect x="150" y="160" width="10" height="10" fill="#1a2220"/><rect x="160" y="160" width="10" height="10" fill="#142828"/><rect x="170" y="160" width="10" height="10" fill="#103232"/><rect x="180" y="160" width="10" height="10" fill="#0c3d3b"/><rect x="190" y="160" width="10" height="10" fill="#094844"/><rect x="200" y="160" width="10" height="10" fill="#05524e"/><rect x="210" y="160" width="10" height="10" fill="#045752"/><rect x="220" y="160" width="10" height="10" fill="#025c55"/><rect x="230" y="160" width="10" height="10" fill="#016158"/><rect x="240" y="160" width="10" height="10" fill="#00665c"/><rect x="250" y="160" width="10" height="10" fill="#00685d"/><rect x="260" y="160" width="10" height="10" fill="#006a5e"/><rect x="270" y="160" width="10" height="10" fill="#006c5e"/><rect x="280" y="160" width="10" height="10" fill="#006e5f"/><rect x="290" y="160" width="10" height="10" fill="#006f5f"/><rect x="300" y="160" width="10" height="10" fill="#006f60"/><rect x="310" y="160" width="10" height="10" fill="#007060"/><rect x="0" y="170" width="10" height="10" fill="#3a0000"/><rect x="10" y="170" width="10" height="10" fill="#3a0000"/><rect x="20" y="170" width="10" height="10" fill="#3a0000"/><rect x="30" y="170" width="10" height="10" fill="#3a0000"/><rect x="40" y="170" width="10" height="10" fill="#3a0000"/><rect x="50" y="170" width="10" height="10" fill="#370000"/><rect x="60" y="170" width="10" height="10" fill="#350100"/><rect x="70" y="170" width="10" height="10" fill="#330200"/><rect x="80" y="170" width="10" height="10" fill="#300200"/><rect x="90" y="170" width="10" height="10" fill="#2d0602"/><rect x="100" y="170" width="10" height="10" fill="#2a0a03"/><rect x="110" y="170" width="10" height="10" fill="#270f04"/><rect x="120" y="170" width="10" height="10" fill="#241306"/><rect x="130" y="170" width="10" height="10" fill="#201a0c"/><rect x="140" y="170" width="10" height="10" fill="#1b2113"/><rect x="150" y="170" width="10" height="10" fill="#17291a"/><rect x="160" y="170" width="10" height="10" fill="#123020"/><rect x="170" y="170" width="10" height="10" fill="#0f3a28"/><rect x="180" y="170" width="10" height="10" fill="#0c4530"/><rect x="190" y="170" width="10" height="10" fill="#094f39"/><rect x="200" y="170" width="10" height="10" fill="#065a41"/><rect x="210" y="170" width="10" height="10" fill="#055e45"/><rect x="220" y="170" width="10" height="10" fill="#046449"/><rect x="230" y="170" width="10" height="10" fill="#02684c"/><rect x="240" y="170" width="10" height="10" fill="#016e50"/><rect x="250" y="170" width="10" height="10" fill="#017051"/><rect x="260" y="170" width="10" height="10" fill="#017252"/><rect x="270" y="170" width="10" height="10" fill="#007453"/><rect x="280" y="170" width="10" height="10" fill="#007754"/><rect x="290" y="170" width="10" height="10" fill="#007854"/><rect x="300" y="170" width="10" height="10" fill="#007955"/><rect x="310" y="170" width="10" height="10" fill="#007a55"/><rect x="0" y="180" width="10" height="10" fill="#310000"/><rect x="10" y="180" width="10" height="10" fill="#310000"/><rect x="20" y="180" width="10" height="10" fill="#310000"/><rect x="30" y="180" width="10" height="10" fill="#310000"/><rect x="40" y="180" width="10" height="10" fill="#310000"/><rect x="50" y="180" width="10" height="10" fill="#2f0100"/><rect x="60" y="180" width="10" height="10" fill="#2d0200"/><rect x="70" y="180" width="10" height="10" fill="#2b0300"/><rect x="80" y="180" width="10" height="10" fill="#2a0400"/><rect x="90" y="180" width="10" height="10" fill="#270901"/><rect x="100" y="180" width="10" height="10" fill="#240d02"/><rect x="110" y="180" width="10" height="10" fill="#221203"/><rect x="120" y="180" width="10" height="10" fill="#1f1604"/><rect x="130" y="180" width="10" height="10" fill="#1b1f09"/><rect x="140" y="180" width="10" height="10" fill="#18270e"/><rect x="150" y="180" width="10" height="10" fill="#143013"/><rect x="160" y="180" width="10" height="10" fill="#103818"/><rect x="170" y="180" width="10" height="10" fill="#0e421f"/><rect x="180" y="180" width="10" height="10" fill="#0c4c26"/><rect x="190" y="180" width="10" height="10" fill="#0a572d"/><rect x="200" y="180" width="10" height="10" fill="#086134"/><rect x="210" y="180" width="10" height="10" fill="#066638"/><rect x="220" y="180" width="10" height="10" fill="#056b3c"/><rect x="230" y="180" width="10" height="10" fill="#047040"/><rect x="240" y="180" width="10" height="10" fill="#027544"/><rect x="250" y="180" width="10" height="10" fill="#027846"/><rect x="260" y="180" width="10" height="10" fill="#017a46"/><rect x="270" y="180" width="10" height="10" fill="#017d48"/><rect x="280" y="180" width="10" height="10" fill="#008048"/><rect x="290" y="180" width="10" height="10" fill="#008149"/><rect x="300" y="180" width="10" height="10" fill="#00824a"/><rect x="310" y="180" width="10" height="10" fill="#00834a"/><rect x="0" y="190" width="10" height="10" fill="#280000"/><rect x="10" y="190" width="10" height="10" fill="#280000"/><rect x="20" y="190" width="10" height="10" fill="#280000"/><rect x="30" y="190" width="10" height="10" fill="#280000"/><rect x="40" y="190" width="10" height="10" fill="#280000"/><rect x="50" y="190" width="10" height="10" fill="#270200"/><rect x="60" y="190" width="10" height="10" fill="#260300"/><rect x="70" y="190" width="10" height="10" fill="#240400"/><rect x="80" y="190" width="10" height="10" fill="#230600"/><rect x="90" y="190" width="10" height="10" fill="#200b00"/><rect x="100" y="190" width="10" height="10" fill="#1e1001"/><rect x="110" y="190" width="10" height="10" fill="#1c1502"/><rect x="120" y="190" width="10" height="10" fill="#1a1a02"/><rect x="130" y="190" width="10" height="10" fill="#172406"/><rect x="140" y="190" width="10" height="10" fill="#142d09"/><rect x="150" y="190" width="10" height="10" fill="#11370c"/><rect x="160" y="190" width="10" height="10" fill="#0e4010"/><rect x="170" y="190" width="10" height="10" fill="#0d4a16"/><rect x="180" y="190" width="10" height="10" fill="#0b541c"/><rect x="190" y="190" width="10" height="10" fill="#0a5e21"/><rect x="200" y="190" width="10" height="10" fill="#096827"/><rect x="210" y="190" width="10" height="10" fill="#086e2b"/><rect x="220" y="190" width="10" height="10" fill="#067230"/><rect x="230" y="190" width="10" height="10" fill="#057834"/><rect x="240" y="190" width="10" height="10" fill="#047c39"/><rect x="250" y="190" width="10" height="10" fill="#037f3a"/><rect x="260" y="190" width="10" height="10" fill="#02823b"/><rect x="270" y="190" width="10" height="10" fill="#01853c"/><rect x="280" y="190" width="10" height="10" fill="#00883d"/><rect x="290" y="190" width="10" height="10" fill="#008a3e"/><rect x="300" y="190" width="10" height="10" fill="#008b3e"/><rect x="310" y="190" width="10" height="10" fill="#008c3f"/><rect x="0" y="200" width="10" height="10" fill="#200000"/><rect x="10" y="200" width="10" height="10" fill="#200000"/><rect x="20" y="200" width="10" height="10" fill="#200000"/><rect x="30" y="200" width="10" height="10" fill="#200000"/><rect x="40" y="200" width="10" height="10" fill="#200000"/><rect x="50" y="200" width="10" height="10" fill="#1f0200"/><rect x="60" y="200" width="10" height="10" fill="#1e0400"/><rect x="70" y="200" width="10" height="10" fill="#1d0600"/><rect x="80" y="200" width="10" height="10" fill="#1c0800"/><rect x="90" y="200" width="10" height="10" fill="#1a0e00"/><rect x="100" y="200" width="10" height="10" fill="#181300"/><rect x="110" y="200" width="10" height="10" fill="#161800"/><rect x="120" y="200" width="10" height="10" fill="#141e00"/><rect x="130" y="200" width="10" height="10" fill="#122802"/><rect x="140" y="200" width="10" height="10" fill="#103304"/><rect x="150" y="200" width="10" height="10" fill="#0e3e06"/><rect x="160" y="200" width="10" height="10" fill="#0c4808"/><rect x="170" y="200" width="10" height="10" fill="#0c520c"/><rect x="180" y="200" width="10" height="10" fill="#0b5c11"/><rect x="190" y="200" width="10" height="10" fill="#0a6616"/><rect x="200" y="200" width="10" height="10" fill="#0a701a"/><rect x="210" y="200" width="10" height="10" fill="#09751f"/><rect x="220" y="200" width="10" height="10" fill="#087a24"/><rect x="230" y="200" width="10" height="10" fill="#067f28"/><rect x="240" y="200" width="10" height="10" fill="#05842d"/><rect x="250" y="200" width="10" height="10" fill="#04872e"/><rect x="260" y="200" width="10" height="10" fill="#028a30"/><rect x="270" y="200" width="10" height="10" fill="#018e31"/><rect x="280" y="200" width="10" height="10" fill="#009132"/><rect x="290" y="200" width="10" height="10" fill="#009333"/><rect x="300" y="200" width="10" height="10" fill="#009433"/><rect x="310" y="200" width="10" height="10" fill="#009634"/><rect x="0" y="210" width="10" height="10" fill="#1e0000"/><rect x="10" y="210" width="10" height="10" fill="#1e0000"/><rect x="20" y="210" width="10" height="10" fill="#1e0000"/><rect x="30" y="210" width="10" height="10" fill="#1e0100"/><rect x="40" y="210" width="10" height="10" fill="#1e0100"/><rect x="50" y="210" width="10" height="10" fill="#1d0300"/><rect x="60" y="210" width="10" height="10" fill="#1c0500"/><rect x="70" y="210" width="10" height="10" fill="#1b0800"/><rect x="80" y="210" width="10" height="10" fill="#1a0a00"/><rect x="90" y="210" width="10" height="10" fill="#180f00"/><rect x="100" y="210" width="10" height="10" fill="#161500"/><rect x="110" y="210" width="10" height="10" fill="#151b00"/><rect x="120" y="210" width="10" height="10" fill="#132000"/><rect x="130" y="210" width="10" height="10" fill="#112b02"/><rect x="140" y="210" width="10" height="10" fill="#0f3503"/><rect x="150" y="210" width="10" height="10" fill="#0d3f04"/><rect x="160" y="210" width="10" height="10" fill="#0c4906"/><rect x="170" y="210" width="10" height="10" fill="#0b540a"/><rect x="180" y="210" width="10" height="10" fill="#0b5f0d"/><rect x="190" y="210" width="10" height="10" fill="#0b6a11"/><rect x="200" y="210" width="10" height="10" fill="#0b7415"/><rect x="210" y="210" width="10" height="10" fill="#0a7a19"/><rect x="220" y="210" width="10" height="10" fill="#097f1d"/><rect x="230" y="210" width="10" height="10" fill="#078421"/><rect x="240" y="210" width="10" height="10" fill="#068a25"/><rect x="250" y="210" width="10" height="10" fill="#058d26"/><rect x="260" y="210" width="10" height="10" fill="#049027"/><rect x="270" y="210" width="10" height="10" fill="#029428"/><rect x="280" y="210" width="10" height="10" fill="#019729"/><rect x="290" y="210" width="10" height="10" fill="#01992a"/><rect x="300" y="210" width="10" height="10" fill="#009a2a"/><rect x="310" y="210" width="10" height="10" fill="#009c2b"/><rect x="0" y="220" width="10" height="10" fill="#1d0000"/><rect x="10" y="220" width="10" height="10" fill="#1d0000"/><rect x="20" y="220" width="10" height="10" fill="#1d0100"/><rect x="30" y="220" width="10" height="10" fill="#1d0200"/><rect x="40" y="220" width="10" height="10" fill="#1d0200"/><rect x="50" y="220" width="10" height="10" fill="#1c0400"/><rect x="60" y="220" width="10" height="10" fill="#1a0700"/><rect x="70" y="220" width="10" height="10" fill="#190900"/><rect x="80" y="220" width="10" height="10" fill="#180c00"/><rect x="90" y="220" width="10" height="10" fill="#161100"/><rect x="100" y="220" width="10" height="10" fill="#151700"/><rect x="110" y="220" width="10" height="10" fill="#131d00"/><rect x="120" y="220" width="10" height="10" fill="#122300"/><rect x="130" y="220" width="10" height="10" fill="#102d01"/><rect x="140" y="220" width="10" height="10" fill="#0e3602"/><rect x="150" y="220" width="10" height="10" fill="#0d4003"/><rect x="160" y="220" width="10" height="10" fill="#0b4a04"/><rect x="170" y="220" width="10" height="10" fill="#0b5607"/><rect x="180" y="220" width="10" height="10" fill="#0c620a"/><rect x="190" y="220" width="10" height="10" fill="#0c6d0d"/><rect x="200" y="220" width="10" height="10" fill="#0c7910"/><rect x="210" y="220" width="10" height="10" fill="#0b7f13"/><rect x="220" y="220" width="10" height="10" fill="#0a8416"/><rect x="230" y="220" width="10" height="10" fill="#098a19"/><rect x="240" y="220" width="10" height="10" fill="#08901c"/><rect x="250" y="220" width="10" height="10" fill="#06931e"/><rect x="260" y="220" width="10" height="10" fill="#05961e"/><rect x="270" y="220" width="10" height="10" fill="#039920"/><rect x="280" y="220" width="10" height="10" fill="#029c20"/><rect x="290" y="220" width="10" height="10" fill="#019e21"/><rect x="300" y="220" width="10" height="10" fill="#01a022"/><rect x="310" y="220" width="10" height="10" fill="#00a222"/><rect x="0" y="230" width="10" height="10" fill="#1c0000"/><rect x="10" y="230" width="10" height="10" fill="#1c0100"/><rect x="20" y="230" width="10" height="10" fill="#1c0200"/><rect x="30" y="230" width="10" height="10" fill="#1c0200"/><rect x="40" y="230" width="10" height="10" fill="#1c0300"/><rect x="50" y="230" width="10" height="10" fill="#1a0600"/><rect x="60" y="230" width="10" height="10" fill="#190800"/><rect x="70" y="230" width="10" height="10" fill="#170b00"/><rect x="80" y="230" width="10" height="10" fill="#160d00"/><rect x="90" y="230" width="10" height="10" fill="#151300"/><rect x="100" y="230" width="10" height="10" fill="#131900"/><rect x="110" y="230" width="10" height="10" fill="#121f00"/><rect x="120" y="230" width="10" height="10" fill="#102600"/><rect x="130" y="230" width="10" height="10" fill="#0f2f00"/><rect x="140" y="230" width="10" height="10" fill="#0d3801"/><rect x="150" y="230" width="10" height="10" fill="#0c4202"/><rect x="160" y="230" width="10" height="10" fill="#0a4b02"/><rect x="170" y="230" width="10" height="10" fill="#0b5804"/><rect x="180" y="230" width="10" height="10" fill="#0c6406"/><rect x="190" y="230" width="10" height="10" fill="#0c7108"/><rect x="200" y="230" width="10" height="10" fill="#0d7e0a"/><rect x="210" y="230" width="10" height="10" fill="#0c830d"/><rect x="220" y="230" width="10" height="10" fill="#0b890f"/><rect x="230" y="230" width="10" height="10" fill="#0a8f12"/><rect x="240" y="230" width="10" height="10" fill="#099514"/><rect x="250" y="230" width="10" height="10" fill="#079815"/><rect x="260" y="230" width="10" height="10" fill="#069c16"/><rect x="270" y="230" width="10" height="10" fill="#049f17"/><rect x="280" y="230" width="10" height="10" fill="#03a218"/><rect x="290" y="230" width="10" height="10" fill="#02a418"/><rect x="300" y="230" width="10" height="10" fill="#01a719"/><rect x="310" y="230" width="10" height="10" fill="#00a919"/><rect x="0" y="240" width="10" height="10" fill="#1a0000"/><rect x="10" y="240" width="10" height="10" fill="#1a0100"/><rect x="20" y="240" width="10" height="10" fill="#1a0200"/><rect x="30" y="240" width="10" height="10" fill="#1a0300"/><rect x="40" y="240" width="10" height="10" fill="#1a0400"/><rect x="50" y="240" width="10" height="10" fill="#180700"/><rect x="60" y="240" width="10" height="10" fill="#170a00"/><rect x="70" y="240" width="10" height="10" fill="#160c00"/><rect x="80" y="240" width="10" height="10" fill="#140f00"/><rect x="90" y="240" width="10" height="10" fill="#131500"/><rect x="100" y="240" width="10" height="10" fill="#121c00"/><rect x="110" y="240" width="10" height="10" fill="#102200"/><rect x="120" y="240" width="10" height="10" fill="#0f2800"/><rect x="130" y="240" width="10" height="10" fill="#0e3100"/><rect x="140" y="240" width="10" height="10" fill="#0c3a00"/><rect x="150" y="240" width="10" height="10" fill="#0b4300"/><rect x="160" y="240" width="10" height="10" fill="#0a4c00"/><rect x="170" y="240" width="10" height="10" fill="#0b5a01"/><rect x="180" y="240" width="10" height="10" fill="#0c6702"/><rect x="190" y="240" width="10" height="10" fill="#0d7404"/><rect x="200" y="240" width="10" height="10" fill="#0e8205"/><rect x="210" y="240" width="10" height="10" fill="#0d8807"/><rect x="220" y="240" width="10" height="10" fill="#0c8e08"/><rect x="230" y="240" width="10" height="10" fill="#0b950a"/><rect x="240" y="240" width="10" height="10" fill="#0a9b0c"/><rect x="250" y="240" width="10" height="10" fill="#089e0d"/><rect x="260" y="240" width="10" height="10" fill="#07a20e"/><rect x="270" y="240" width="10" height="10" fill="#06a50e"/><rect x="280" y="240" width="10" height="10" fill="#04a80f"/><rect x="290" y="240" width="10" height="10" fill="#03aa0f"/><rect x="300" y="240" width="10" height="10" fill="#01ad10"/><rect x="310" y="240" width="10" height="10" fill="#00af10"/><rect x="0" y="250" width="10" height="10" fill="#1a0000"/><rect x="10" y="250" width="10" height="10" fill="#1a0100"/><rect x="20" y="250" width="10" height="10" fill="#1a0200"/><rect x="30" y="250" width="10" height="10" fill="#1a0300"/><rect x="40" y="250" width="10" height="10" fill="#1a0400"/><rect x="50" y="250" width="10" height="10" fill="#190700"/><rect x="60" y="250" width="10" height="10" fill="#170a00"/><rect x="70" y="250" width="10" height="10" fill="#160e00"/><rect x="80" y="250" width="10" height="10" fill="#141100"/><rect x="90" y="250" width="10" height="10" fill="#131700"/><rect x="100" y="250" width="10" height="10" fill="#121d00"/><rect x="110" y="250" width="10" height="10" fill="#102400"/><rect x="120" y="250" width="10" height="10" fill="#0f2a00"/><rect x="130" y="250" width="10" height="10" fill="#0e3300"/><rect x="140" y="250" width="10" height="10" fill="#0c3c00"/><rect x="150" y="250" width="10" height="10" fill="#0b4500"/><rect x="160" y="250" width="10" height="10" fill="#0a4e00"/><rect x="170" y="250" width="10" height="10" fill="#0b5c01"/><rect x="180" y="250" width="10" height="10" fill="#0c6902"/><rect x="190" y="250" width="10" height="10" fill="#0d7703"/><rect x="200" y="250" width="10" height="10" fill="#0e8404"/><rect x="210" y="250" width="10" height="10" fill="#0c8b05"/><rect x="220" y="250" width="10" height="10" fill="#0c9107"/><rect x="230" y="250" width="10" height="10" fill="#0a9808"/><rect x="240" y="250" width="10" height="10" fill="#0a9e0a"/><rect x="250" y="250" width="10" height="10" fill="#08a20b"/><rect x="260" y="250" width="10" height="10" fill="#07a50b"/><rect x="270" y="250" width="10" height="10" fill="#05a80c"/><rect x="280" y="250" width="10" height="10" fill="#04ac0d"/><rect x="290" y="250" width="10" height="10" fill="#02ae0d"/><rect x="300" y="250" width="10" height="10" fill="#01b00d"/><rect x="310" y="250" width="10" height="10" fill="#00b20e"/><rect x="0" y="260" width="10" height="10" fill="#1b0000"/><rect x="10" y="260" width="10" height="10" fill="#1b0100"/><rect x="20" y="260" width="10" height="10" fill="#1b0200"/><rect x="30" y="260" width="10" height="10" fill="#1b0300"/><rect x="40" y="260" width="10" height="10" fill="#1b0400"/><rect x="50" y="260" width="10" height="10" fill="#190800"/><rect x="60" y="260" width="10" height="10" fill="#180c00"/><rect x="70" y="260" width="10" height="10" fill="#160f00"/><rect x="80" y="260" width="10" height="10" fill="#141200"/><rect x="90" y="260" width="10" height="10" fill="#131900"/><rect x="100" y="260" width="10" height="10" fill="#121f00"/><rect x="110" y="260" width="10" height="10" fill="#102600"/><rect x="120" y="260" width="10" height="10" fill="#0f2c00"/><rect x="130" y="260" width="10" height="10" fill="#0e3500"/><rect x="140" y="260" width="10" height="10" fill="#0c3e00"/><rect x="150" y="260" width="10" height="10" fill="#0b4800"/><rect x="160" y="260" width="10" height="10" fill="#0a5100"/><rect x="170" y="260" width="10" height="10" fill="#0b5e01"/><rect x="180" y="260" width="10" height="10" fill="#0c6c01"/><rect x="190" y="260" width="10" height="10" fill="#0c7902"/><rect x="200" y="260" width="10" height="10" fill="#0d8602"/><rect x="210" y="260" width="10" height="10" fill="#0c8d04"/><rect x="220" y="260" width="10" height="10" fill="#0b9405"/><rect x="230" y="260" width="10" height="10" fill="#0a9b07"/><rect x="240" y="260" width="10" height="10" fill="#09a208"/><rect x="250" y="260" width="10" height="10" fill="#08a509"/><rect x="260" y="260" width="10" height="10" fill="#06a809"/><rect x="270" y="260" width="10" height="10" fill="#05ac0a"/><rect x="280" y="260" width="10" height="10" fill="#04af0a"/><rect x="290" y="260" width="10" height="10" fill="#02b10b"/><rect x="300" y="260" width="10" height="10" fill="#01b30b"/><rect x="310" y="260" width="10" height="10" fill="#00b50b"/><rect x="0" y="270" width="10" height="10" fill="#1c0000"/><rect x="10" y="270" width="10" height="10" fill="#1c0100"/><rect x="20" y="270" width="10" height="10" fill="#1c0200"/><rect x="30" y="270" width="10" height="10" fill="#1c0400"/><rect x="40" y="270" width="10" height="10" fill="#1c0500"/><rect x="50" y="270" width="10" height="10" fill="#1a0900"/><rect x="60" y="270" width="10" height="10" fill="#180c00"/><rect x="70" y="270" width="10" height="10" fill="#161000"/><rect x="80" y="270" width="10" height="10" fill="#141400"/><rect x="90" y="270" width="10" height="10" fill="#131b00"/><rect x="100" y="270" width="10" height="10" fill="#122100"/><rect x="110" y="270" width="10" height="10" fill="#102800"/><rect x="120" y="270" width="10" height="10" fill="#0f2e00"/><rect x="130" y="270" width="10" height="10" fill="#0e3700"/><rect x="140" y="270" width="10" height="10" fill="#0c4100"/><rect x="150" y="270" width="10" height="10" fill="#0b4a00"/><rect x="160" y="270" width="10" height="10" fill="#0a5400"/><rect x="170" y="270" width="10" height="10" fill="#0b6100"/><rect x="180" y="270" width="10" height="10" fill="#0b6e01"/><rect x="190" y="270" width="10" height="10" fill="#0c7b01"/><rect x="200" y="270" width="10" height="10" fill="#0c8801"/><rect x="210" y="270" width="10" height="10" fill="#0c8f02"/><rect x="220" y="270" width="10" height="10" fill="#0a9604"/><rect x="230" y="270" width="10" height="10" fill="#0a9e05"/><rect x="240" y="270" width="10" height="10" fill="#08a506"/><rect x="250" y="270" width="10" height="10" fill="#07a807"/><rect x="260" y="270" width="10" height="10" fill="#06ac07"/><rect x="270" y="270" width="10" height="10" fill="#05af08"/><rect x="280" y="270" width="10" height="10" fill="#03b208"/><rect x="290" y="270" width="10" height="10" fill="#02b408"/><rect x="300" y="270" width="10" height="10" fill="#01b608"/><rect x="310" y="270" width="10" height="10" fill="#00b808"/><rect x="0" y="280" width="10" height="10" fill="#1c0000"/><rect x="10" y="280" width="10" height="10" fill="#1c0100"/><rect x="20" y="280" width="10" height="10" fill="#1c0200"/><rect x="30" y="280" width="10" height="10" fill="#1c0400"/><rect x="40" y="280" width="10" height="10" fill="#1c0500"/><rect x="50" y="280" width="10" height="10" fill="#1a0900"/><rect x="60" y="280" width="10" height="10" fill="#180e00"/><rect x="70" y="280" width="10" height="10" fill="#161200"/><rect x="80" y="280" width="10" height="10" fill="#141600"/><rect x="90" y="280" width="10" height="10" fill="#131c00"/><rect x="100" y="280" width="10" height="10" fill="#122300"/><rect x="110" y="280" width="10" height="10" fill="#102a00"/><rect x="120" y="280" width="10" height="10" fill="#0f3000"/><rect x="130" y="280" width="10" height="10" fill="#0e3a00"/><rect x="140" y="280" width="10" height="10" fill="#0c4300"/><rect x="150" y="280" width="10" height="10" fill="#0b4c00"/><rect x="160" y="280" width="10" height="10" fill="#0a5600"/><rect x="170" y="280" width="10" height="10" fill="#0a6300"/><rect x="180" y="280" width="10" height="10" fill="#0b7000"/><rect x="190" y="280" width="10" height="10" fill="#0c7d00"/><rect x="200" y="280" width="10" height="10" fill="#0c8a00"/><rect x="210" y="280" width="10" height="10" fill="#0b9201"/><rect x="220" y="280" width="10" height="10" fill="#0a9902"/><rect x="230" y="280" width="10" height="10" fill="#09a003"/><rect x="240" y="280" width="10" height="10" fill="#08a804"/><rect x="250" y="280" width="10" height="10" fill="#07ac04"/><rect x="260" y="280" width="10" height="10" fill="#06af05"/><rect x="270" y="280" width="10" height="10" fill="#04b206"/><rect x="280" y="280" width="10" height="10" fill="#03b606"/><rect x="290" y="280" width="10" height="10" fill="#02b806"/><rect x="300" y="280" width="10" height="10" fill="#01b906"/><rect x="310" y="280" width="10" height="10" fill="#00bb06"/><rect x="0" y="290" width="10" height="10" fill="#1e0000"/><rect x="10" y="290" width="10" height="10" fill="#1e0100"/><rect x="20" y="290" width="10" height="10" fill="#1d0200"/><rect x="30" y="290" width="10" height="10" fill="#1d0400"/><rect x="40" y="290" width="10" height="10" fill="#1d0500"/><rect x="50" y="290" width="10" height="10" fill="#1b0a00"/><rect x="60" y="290" width="10" height="10" fill="#180e00"/><rect x="70" y="290" width="10" height="10" fill="#161200"/><rect x="80" y="290" width="10" height="10" fill="#141700"/><rect x="90" y="290" width="10" height="10" fill="#131e00"/><rect x="100" y="290" width="10" height="10" fill="#122500"/><rect x="110" y="290" width="10" height="10" fill="#102c00"/><rect x="120" y="290" width="10" height="10" fill="#0f3200"/><rect x="130" y="290" width="10" height="10" fill="#0e3c00"/><rect x="140" y="290" width="10" height="10" fill="#0d4600"/><rect x="150" y="290" width="10" height="10" fill="#0b4f00"/><rect x="160" y="290" width="10" height="10" fill="#0a5900"/><rect x="170" y="290" width="10" height="10" fill="#0a6600"/><rect x="180" y="290" width="10" height="10" fill="#0b7300"/><rect x="190" y="290" width="10" height="10" fill="#0b8000"/><rect x="200" y="290" width="10" height="10" fill="#0b8c00"/><rect x="210" y="290" width="10" height="10" fill="#0a9401"/><rect x="220" y="290" width="10" height="10" fill="#099c01"/><rect x="230" y="290" width="10" height="10" fill="#08a302"/><rect x="240" y="290" width="10" height="10" fill="#07ab03"/><rect x="250" y="290" width="10" height="10" fill="#06ae03"/><rect x="260" y="290" width="10" height="10" fill="#05b203"/><rect x="270" y="290" width="10" height="10" fill="#04b504"/><rect x="280" y="290" width="10" height="10" fill="#03b904"/><rect x="290" y="290" width="10" height="10" fill="#02ba04"/><rect x="300" y="290" width="10" height="10" fill="#01bc04"/><rect x="310" y="290" width="10" height="10" fill="#00be04"/><rect x="0" y="300" width="10" height="10" fill="#200000"/><rect x="10" y="300" width="10" height="10" fill="#1f0100"/><rect x="20" y="300" width="10" height="10" fill="#1f0200"/><rect x="30" y="300" width="10" height="10" fill="#1e0400"/><rect x="40" y="300" width="10" height="10" fill="#1d0500"/><rect x="50" y="300" width="10" height="10" fill="#1b0a00"/><rect x="60" y="300" width="10" height="10" fill="#190e00"/><rect x="70" y="300" width="10" height="10" fill="#161300"/><rect x="80" y="300" width="10" height="10" fill="#141800"/><rect x="90" y="300" width="10" height="10" fill="#131f00"/><rect x="100" y="300" width="10" height="10" fill="#122600"/><rect x="110" y="300" width="10" height="10" fill="#102e00"/><rect x="120" y="300" width="10" height="10" fill="#0f3500"/><rect x="130" y="300" width="10" height="10" fill="#0e3e00"/><rect x="140" y="300" width="10" height="10" fill="#0c4800"/><rect x="150" y="300" width="10" height="10" fill="#0b5200"/><rect x="160" y="300" width="10" height="10" fill="#0a5c00"/><rect x="170" y="300" width="10" height="10" fill="#0a6900"/><rect x="180" y="300" width="10" height="10" fill="#0a7500"/><rect x="190" y="300" width="10" height="10" fill="#0a8200"/><rect x="200" y="300" width="10" height="10" fill="#0b8f00"/><rect x="210" y="300" width="10" height="10" fill="#0a9600"/><rect x="220" y="300" width="10" height="10" fill="#089e01"/><rect x="230" y="300" width="10" height="10" fill="#07a601"/><rect x="240" y="300" width="10" height="10" fill="#06ad01"/><rect x="250" y="300" width="10" height="10" fill="#05b102"/><rect x="260" y="300" width="10" height="10" fill="#04b402"/><rect x="270" y="300" width="10" height="10" fill="#03b802"/><rect x="280" y="300" width="10" height="10" fill="#02bb02"/><rect x="290" y="300" width="10" height="10" fill="#02bd02"/><rect x="300" y="300" width="10" height="10" fill="#01bf02"/><rect x="310" y="300" width="10" height="10" fill="#00c102"/><rect x="0" y="310" width="10" height="10" fill="#220000"/><rect x="10" y="310" width="10" height="10" fill="#210100"/><rect x="20" y="310" width="10" height="10" fill="#200200"/><rect x="30" y="310" width="10" height="10" fill="#1f0400"/><rect x="40" y="310" width="10" height="10" fill="#1e0500"/><rect x="50" y="310" width="10" height="10" fill="#1c0a00"/><rect x="60" y="310" width="10" height="10" fill="#190f00"/><rect x="70" y="310" width="10" height="10" fill="#161400"/><rect x="80" y="310" width="10" height="10" fill="#141900"/><rect x="90" y="310" width="10" height="10" fill="#132000"/><rect x="100" y="310" width="10" height="10" fill="#122800"/><rect x="110" y="310" width="10" height="10" fill="#103000"/><rect x="120" y="310" width="10" height="10" fill="#0f3700"/><rect x="130" y="310" width="10" height="10" fill="#0e4100"/><rect x="140" y="310" width="10" height="10" fill="#0c4b00"/><rect x="150" y="310" width="10" height="10" fill="#0b5500"/><rect x="160" y="310" width="10" height="10" fill="#0a5f00"/><rect x="170" y="310" width="10" height="10" fill="#0a6c00"/><rect x="180" y="310" width="10" height="10" fill="#0a7800"/><rect x="190" y="310" width="10" height="10" fill="#0a8400"/><rect x="200" y="310" width="10" height="10" fill="#0a9100"/><rect x="210" y="310" width="10" height="10" fill="#099900"/><rect x="220" y="310" width="10" height="10" fill="#08a000"/><rect x="230" y="310" width="10" height="10" fill="#06a800"/><rect x="240" y="310" width="10" height="10" fill="#05b000"/><rect x="250" y="310" width="10" height="10" fill="#04b400"/><rect x="260" y="310" width="10" height="10" fill="#04b700"/><rect x="270" y="310" width="10" height="10" fill="#03ba00"/><rect x="280" y="310" width="10" height="10" fill="#02be00"/><rect x="290" y="310" width="10" height="10" fill="#01c000"/><rect x="300" y="310" width="10" height="10" fill="#01c200"/><rect x="310" y="310" width="10" height="10" fill="#00c400"/></svg></div>
<div class="mk" style="left:468px;top:149px"></div>
<div class="mk" style="left:778px;top:149px"></div>
<div class="mk" style="left:478px;top:379px"></div>
<div class="mk" style="left:778px;top:459px"></div>
<div class="mk" style="left:698px;top:449px;background:#0000ff"></div>
<div class="a" style="left:798px;top:117px;width:2px;height:359px;background:#3b5651"></div>
</div></body></html>
